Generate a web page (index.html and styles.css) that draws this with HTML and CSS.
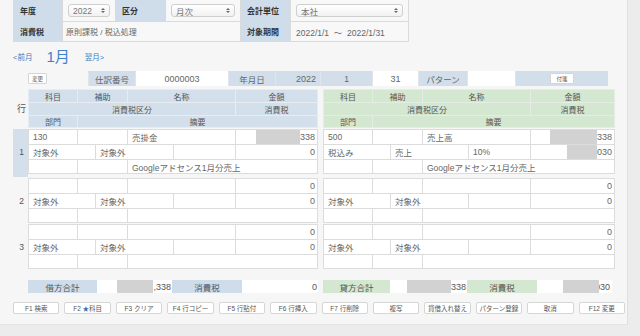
FILE: index.html
```html
<!DOCTYPE html>
<html lang="ja">
<head>
	<meta charset="UTF-8">
	<title>仕訳入力</title>
	<link rel="stylesheet" href="styles.css">
</head>
<body>
<div class="page">
	<!-- 条件 -->
	<div class="top">
		<div class="lb">年度</div>
		<div class="val"><div class="sel">2022<i class="arw"></i></div></div>
		<div class="lb">区分</div>
		<div class="val"><div class="sel">月次<i class="arw"></i></div></div>
		<div class="lb">会計単位</div>
		<div class="val"><div class="sel">本社<i class="arw"></i></div></div>
		<div class="lb">消費税</div>
		<div class="val wide">原則課税 / 税込処理</div>
		<div class="lb">対象期間</div>
		<div class="val">2022/1/1 &nbsp;～&nbsp; 2022/1/31</div>
	</div>

	<div class="nav">
		<a href="javascript:;" class="prev">&lt;前月</a>
		<span class="month">1月</span>
		<a href="javascript:;" class="next">翌月&gt;</a>
	</div>

	<!-- 仕訳ヘッダ -->
	<div class="head">
		<button class="mini">変更</button>
		<div class="hcells">
			<div class="hl">仕訳番号</div>
			<div class="hv c">0000003</div>
			<div class="hl">年月日</div>
			<div class="hl r">2022</div>
			<div class="hl">1</div>
			<div class="hv c">31</div>
			<div class="hl">パターン</div>
			<div class="hv"></div>
			<div class="hl"><button class="mini">付箋</button></div>
		</div>
	</div>

	<!-- 明細見出し -->
	<div class="row gh">
		<div class="no">行</div>
		<div class="side">
			<div class="ln la"><div>科目</div><div>補助</div><div>名称</div><div>金額</div></div>
			<div class="ln lb2"><div>消費税区分</div><div>消費税</div></div>
			<div class="ln lc"><div>部門</div><div>摘要</div></div>
		</div>
		<div class="side r">
			<div class="ln la"><div>科目</div><div>補助</div><div>名称</div><div>金額</div></div>
			<div class="ln lb2"><div>消費税区分</div><div>消費税</div></div>
			<div class="ln lc"><div>部門</div><div>摘要</div></div>
		</div>
	</div>

	<!-- 明細 -->
	<div class="row ent cur">
		<div class="no">1</div>
		<div class="side">
			<div class="ln la"><div>130</div><div></div><div>売掛金</div><div class="amt"><span class="mask w44"></span>338</div></div>
			<div class="ln l2"><div>対象外</div><div>対象外</div><div></div><div class="amt">0</div></div>
			<div class="ln l3"><div></div><div></div><div>Googleアドセンス1月分売上</div></div>
		</div>
		<div class="side r">
			<div class="ln la"><div>500</div><div></div><div>売上高</div><div class="amt"><span class="mask w47"></span>338</div></div>
			<div class="ln l2"><div>税込み</div><div>売上</div><div>10%</div><div class="amt"><span class="mask w30"></span>030</div></div>
			<div class="ln l3"><div></div><div></div><div>Googleアドセンス1月分売上</div></div>
		</div>
	</div>
	<div class="row ent">
		<div class="no">2</div>
		<div class="side">
			<div class="ln la"><div></div><div></div><div></div><div class="amt">0</div></div>
			<div class="ln l2"><div>対象外</div><div>対象外</div><div></div><div class="amt">0</div></div>
			<div class="ln l3"><div></div><div></div><div></div></div>
		</div>
		<div class="side r">
			<div class="ln la"><div></div><div></div><div></div><div class="amt">0</div></div>
			<div class="ln l2"><div>対象外</div><div>対象外</div><div></div><div class="amt">0</div></div>
			<div class="ln l3"><div></div><div></div><div></div></div>
		</div>
	</div>
	<div class="row ent">
		<div class="no">3</div>
		<div class="side">
			<div class="ln la"><div></div><div></div><div></div><div class="amt">0</div></div>
			<div class="ln l2"><div>対象外</div><div>対象外</div><div></div><div class="amt">0</div></div>
			<div class="ln l3"><div></div><div></div><div></div></div>
		</div>
		<div class="side r">
			<div class="ln la"><div></div><div></div><div></div><div class="amt">0</div></div>
			<div class="ln l2"><div>対象外</div><div>対象外</div><div></div><div class="amt">0</div></div>
			<div class="ln l3"><div></div><div></div><div></div></div>
		</div>
	</div>

	<!-- 合計 -->
	<div class="row total">
		<div class="no"></div>
		<div class="tside">
			<div class="tl">借方合計</div>
			<div class="tv"><span class="mask w36"></span>,338</div>
			<div class="tl">消費税</div>
			<div class="tv">0</div>
		</div>
		<div class="tside g">
			<div class="tl">貸方合計</div>
			<div class="tv"><span class="mask w44"></span>338</div>
			<div class="tl">消費税</div>
			<div class="tv"><span class="mask w36 over"></span>030</div>
		</div>
	</div>

	<!-- ファンクション -->
	<div class="fkeys">
		<button>F1 検索</button>
		<button>F2 <b>★</b>科目</button>
		<button>F3 クリア</button>
		<button>F4 行コピー</button>
		<button>F5 行貼付</button>
		<button>F6 行挿入</button>
		<button>F7 行削除</button>
		<button>複写</button>
		<button>貸借入れ替え</button>
		<button>パターン登録</button>
		<button>取消</button>
		<button>F12 変更</button>
	</div>
</div>
</body>
</html>
```
FILE: styles.css
```css
*{margin:0;padding:0;box-sizing:border-box;}
body{
	background:#ececec;
	font-family:"Liberation Sans","Noto Sans CJK JP",sans-serif;
	font-size:8px;
	color:#555;
}
.page{
	width:628px;
	height:325px;
	background:#f6f6f6;
	padding-left:13px;
	border-right:1px solid #e0e0e0;
	border-bottom:1px solid #e4e4e4;
}

/* 条件 */
.top{
	display:grid;
	grid-template-columns:48px 52px 49px 74px 49px 117px;
	grid-template-rows:21px 19px;
	gap:1px;
	width:396px;
	padding:0 1px 1px 1px;
	background:#dadada;
}
.top .lb{
	background:#cfdcea;
	font-weight:bold;
	color:#333;
	display:flex;
	align-items:center;
	padding-left:6px;
}
.top .val{
	background:#f8f8f8;
	display:flex;
	align-items:center;
	padding:0 5px;
	font-size:8.5px;
	color:#666;
}
.top .val.wide{grid-column:span 3;padding-left:3px;font-size:8px;}
.sel{
	flex:1;
	height:13px;
	border:1px solid #cfcfcf;
	border-radius:3px;
	background:linear-gradient(#fff,#f1f1f1);
	display:flex;
	align-items:center;
	padding-left:4px;
	position:relative;
	font-size:8.5px;
	color:#777;
}
.arw{
	position:absolute;
	right:4px;
	top:3px;
	width:0;height:0;
	border-left:2px solid transparent;
	border-right:2px solid transparent;
	border-bottom:2px solid #666;
}
.arw:after{
	content:'';
	position:absolute;
	left:-2px;
	top:3px;
	border-left:2px solid transparent;
	border-right:2px solid transparent;
	border-top:2px solid #666;
}

/* 月 */
.nav{
	height:26px;
	display:flex;
	align-items:center;
}
.nav a{
	text-decoration:none;
	color:#3e7bc0;
	font-size:7.5px;
	margin-top:2px;
}
.nav .month{
	font-size:15px;
	color:#3f80c8;
	margin:0 15px 0 14px;
}

/* 仕訳ヘッダ */
.head{
	margin-top:3px;
	height:15px;
	display:flex;
	align-items:center;
	padding-left:15px;
}
.mini{
	width:19px;
	height:11px;
	border:1px solid #d5d5d5;
	background:#fff;
	font-family:inherit;
	font-size:5.5px;
	color:#555;
	border-radius:1px;
}
.head .hcells{
	margin-left:41px;
	display:grid;
	grid-template-columns:46px 92px 46px 44px 51px 45px 48px 47px 92px;
	gap:1px;
	height:15px;
	background:#dfe5ea;
	padding:0 0 0 1px;
}
.hcells div{
	display:flex;
	align-items:center;
	justify-content:center;
	font-size:8.5px;
	color:#666;
}
.hcells .hl{background:#d2dfeb;}
.hcells .hl.r{justify-content:flex-end;padding-right:4px;font-size:9px;}
.hcells .hv{background:#fff;font-size:9px;}
.hcells .mini{width:24px;}

/* 明細 */
.row{display:flex;}
.row .no{
	width:15px;
	display:flex;
	align-items:center;
	justify-content:center;
	font-size:8.5px;
	color:#555;
	padding-left:2px;
}
.side{
	width:290px;
	display:grid;
	gap:1px;
	padding:1px;
	background:#dcdcdc;
	align-self:flex-start;
}
.side.r{width:292px;margin-left:5px;}
.ln{display:grid;gap:1px;height:14px;}
.ln div{
	background:#fff;
	display:flex;
	align-items:center;
	padding-left:4px;
	font-size:8.5px;
	color:#666;
	overflow:hidden;
	white-space:nowrap;
}
.la{grid-template-columns:48px 49px 107px 81px;}
.lb2{grid-template-columns:206px 81px;}
.lc{grid-template-columns:48px 239px;}
.l2{grid-template-columns:66px 77px 61px 81px;}
.l3{grid-template-columns:48px 49px 189px;height:13px;}
.side.r .la{grid-template-columns:48px 49px 107px 83px;}
.side.r .lb2{grid-template-columns:206px 83px;}
.side.r .lc{grid-template-columns:48px 241px;}
.side.r .l2{grid-template-columns:66px 77px 61px 83px;}
.side.r .l3{grid-template-columns:48px 49px 191px;}
.ln .amt{justify-content:flex-end;padding:0 2px 0 0;font-size:9px;}
.mask{
	display:block;
	height:100%;
	background:#d2d2d2;
	margin-right:1px;
}
.w30{width:30px;}
.w36{width:36px;}
.w44{width:44px;}
.w47{width:47px;}
.ln .amt .mask{margin-right:0;}

.gh{margin-top:3px;}
.gh .no{align-items:center;font-size:9px;}
.gh .side{background:#e6ecf1;}
.gh .side.r{background:#e3ede1;}
.gh .ln{height:12px;}
.gh .ln.lc{height:11px;}
.gh .ln div{background:#d3e0ec;justify-content:center;padding:0;font-size:8px;color:#555;}
.gh .side.r .ln div{background:#d4e7d0;}

.ent{margin-top:1px;}
.gh + .ent{margin-top:1px;}
.ent.cur{background:linear-gradient(to right,#d3e0ec 15px,transparent 15px);padding-bottom:3px;}
.ent.cur + .ent{margin-top:1px;}

/* 合計 */
.total{margin-top:11px;}
.tside{
	width:290px;
	height:13px;
	display:grid;
	grid-template-columns:69px 75px 70px 76px;
}
.tside.g{width:289px;margin-left:5px;grid-template-columns:67px 77px 70px 75px;}
.tside div{display:flex;align-items:center;font-size:8.5px;color:#555;}
.tl{background:#cfdcea;justify-content:center;}
.tside.g .tl{background:#d4e7d0;}
.tv{background:#fff;justify-content:flex-end;padding-right:1px;font-size:9px !important;}
.tv .mask{margin-right:0;}
.tv .over{position:relative;z-index:1;margin-right:-4px;}
.tside.g .tv:last-child{padding-right:2px;}

/* ファンクション */
.fkeys{
	margin-top:9px;
	width:612px;
	display:grid;
	grid-template-columns:repeat(12,1fr);
	gap:5px;
}
.fkeys button{
	height:12px;
	background:#fff;
	border:1px solid #d6d6d6;
	border-radius:2px;
	font-family:inherit;
	font-size:6.5px;
	color:#555;
	white-space:nowrap;
}
.fkeys button b{color:#2f6fbf;font-weight:normal;}
```
